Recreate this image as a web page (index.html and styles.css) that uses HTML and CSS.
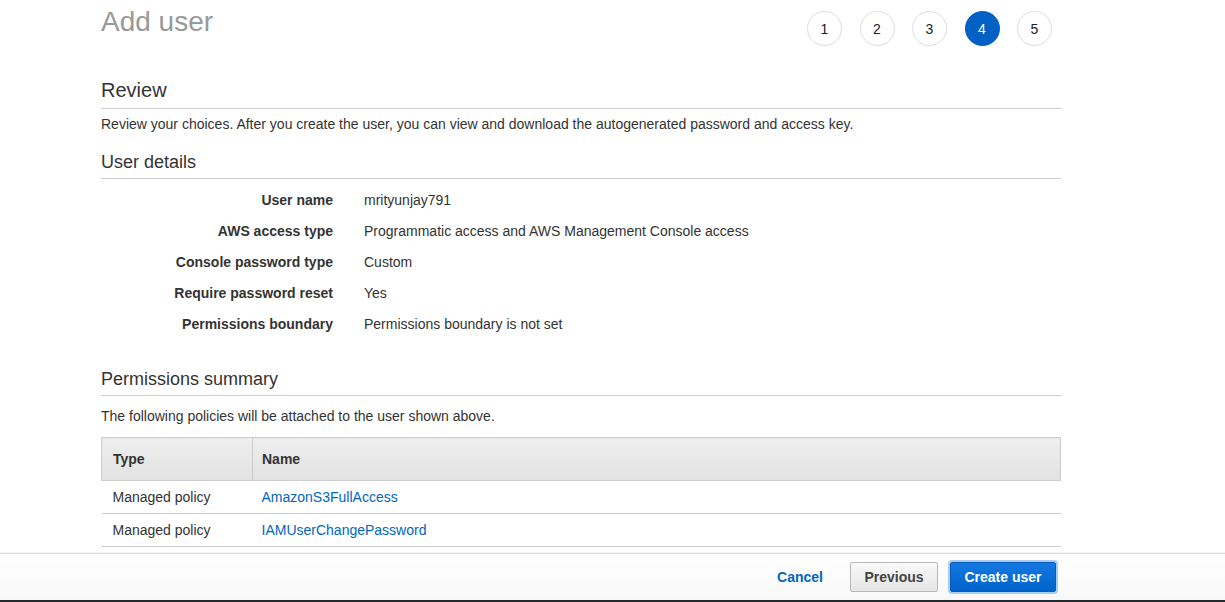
FILE: index.html
```html
<!DOCTYPE html>
<html>
<head>
<meta charset="utf-8">
<title>Add user</title>
<link rel="stylesheet" href="styles.css">
</head>
<body>
<div class="page">
  <div class="content">
    <div class="header">
      <h1 class="title">Add user</h1>
      <ol class="steps">
        <li class="step">1</li>
        <li class="step">2</li>
        <li class="step">3</li>
        <li class="step step-active">4</li>
        <li class="step">5</li>
      </ol>
    </div>

    <h2 class="section-title">Review</h2>
    <p class="desc">Review your choices. After you create the user, you can view and download the autogenerated password and access key.</p>

    <h3 class="sub-title">User details</h3>
    <dl class="details">
      <div class="detail-row"><dt>User name</dt><dd>mrityunjay791</dd></div>
      <div class="detail-row"><dt>AWS access type</dt><dd>Programmatic access and AWS Management Console access</dd></div>
      <div class="detail-row"><dt>Console password type</dt><dd>Custom</dd></div>
      <div class="detail-row"><dt>Require password reset</dt><dd>Yes</dd></div>
      <div class="detail-row"><dt>Permissions boundary</dt><dd>Permissions boundary is not set</dd></div>
    </dl>

    <h3 class="sub-title perm-title">Permissions summary</h3>
    <p class="desc perm-desc">The following policies will be attached to the user shown above.</p>

    <table class="policies">
      <thead>
        <tr><th class="col-type">Type</th><th class="col-name">Name</th></tr>
      </thead>
      <tbody>
        <tr><td class="col-type">Managed policy</td><td class="col-name"><a href="#">AmazonS3FullAccess</a></td></tr>
        <tr><td class="col-type">Managed policy</td><td class="col-name"><a href="#">IAMUserChangePassword</a></td></tr>
      </tbody>
    </table>
  </div>

  <div class="footer">
    <div class="footer-inner">
      <a href="#" class="btn-link">Cancel</a>
      <button class="btn btn-secondary">Previous</button>
      <button class="btn btn-primary">Create user</button>
    </div>
  </div>
  <div class="bottom-bar"></div>
</div>
</body>
</html>
```

FILE: styles.css
```css
* {
  box-sizing: border-box;
}

html, body {
  margin: 0;
  padding: 0;
  background: #fff;
}

body {
  font-family: "Helvetica Neue", "Liberation Sans", Arial, sans-serif;
  font-size: 14px;
  color: #333;
}

.page {
  width: 1225px;
  height: 602px;
  display: flex;
  flex-direction: column;
  overflow: hidden;
}

.content {
  width: 960px;
  margin-left: 101px;
  flex: 1;
}

.header {
  display: flex;
  justify-content: space-between;
  align-items: flex-start;
  height: 48px;
}

.title {
  margin: 2px 0 0;
  font-size: 28px;
  line-height: 40px;
  font-weight: 400;
  color: #999;
}

.steps {
  list-style: none;
  margin: 11px 9px 0 0;
  padding: 0;
  display: flex;
  gap: 17.5px;
}

.step {
  width: 35px;
  height: 35px;
  border-radius: 50%;
  border: 1px solid #ddd;
  display: flex;
  align-items: center;
  justify-content: center;
  font-size: 14px;
  color: #222;
  background: #fff;
}

.step-active {
  background: #0060c4;
  border-color: #0060c4;
  color: #fff;
}

.section-title {
  margin: 30px 0 0;
  font-size: 20px;
  line-height: 24px;
  font-weight: 400;
  color: #333;
  padding-bottom: 6px;
  border-bottom: 1px solid #ccc;
}

.desc {
  margin: 5px 0 0;
  line-height: 20px;
  color: #333;
}

.sub-title {
  margin: 17px 0 0;
  font-size: 18px;
  line-height: 22px;
  font-weight: 400;
  color: #333;
  padding-bottom: 5px;
  border-bottom: 1px solid #ccc;
}

.details {
  margin: 6px 0 0;
  padding: 0;
}

.detail-row {
  display: flex;
  line-height: 31px;
}

.detail-row dt {
  width: 232px;
  text-align: right;
  font-weight: 700;
  color: #333;
}

.detail-row dd {
  margin: 0 0 0 31px;
  color: #333;
}

.perm-title {
  margin-top: 28px;
}

.perm-desc {
  margin-top: 10px;
}

.policies {
  margin-top: 11px;
  width: 100%;
  border-collapse: collapse;
}

.policies th {
  height: 43px;
  text-align: left;
  font-weight: 700;
  color: #333;
  background: linear-gradient(#eeeeee, #e2e2e2);
  border: 1px solid #ccc;
}

.policies th.col-type {
  padding-left: 11px;
  width: 151px;
}

.policies th.col-name {
  padding-left: 9px;
}

.policies td {
  height: 33px;
  border-bottom: 1px solid #ccc;
  color: #333;
}

.policies td.col-type {
  padding-left: 11px;
}

.policies td.col-name {
  padding-left: 9px;
}

.policies a {
  color: #0066c0;
  text-decoration: none;
}

.footer {
  height: 47px;
  border-top: 1px solid #ddd;
  box-shadow: 0 -1px 0 #f2f2f2;
  background: linear-gradient(#ffffff, #f8f8f8);
}

.footer-inner {
  width: 960px;
  margin-left: 101px;
  height: 100%;
  display: flex;
  justify-content: flex-end;
  align-items: center;
  padding-right: 5px;
  padding-bottom: 1px;
}

.btn-link {
  font-weight: 700;
  color: #0066c0;
  text-decoration: none;
  margin-right: 27px;
}

.btn {
  font-family: inherit;
  font-size: 14px;
  font-weight: 700;
  height: 30px;
  border-radius: 2px;
  cursor: pointer;
}

.btn-secondary {
  width: 88px;
  color: #444;
  background: linear-gradient(#f9f9f9, #e6e6e6);
  border: 1px solid #b8b8b8;
}

.btn-primary {
  width: 106px;
  margin-left: 12px;
  color: #fff;
  background: linear-gradient(#1579e3, #0063cc);
  border: 1px solid #0a5cb8;
  box-shadow: 0 0 0 2px #a9cdf5;
}

.bottom-bar {
  height: 2px;
  background: #23282d;
}
```
